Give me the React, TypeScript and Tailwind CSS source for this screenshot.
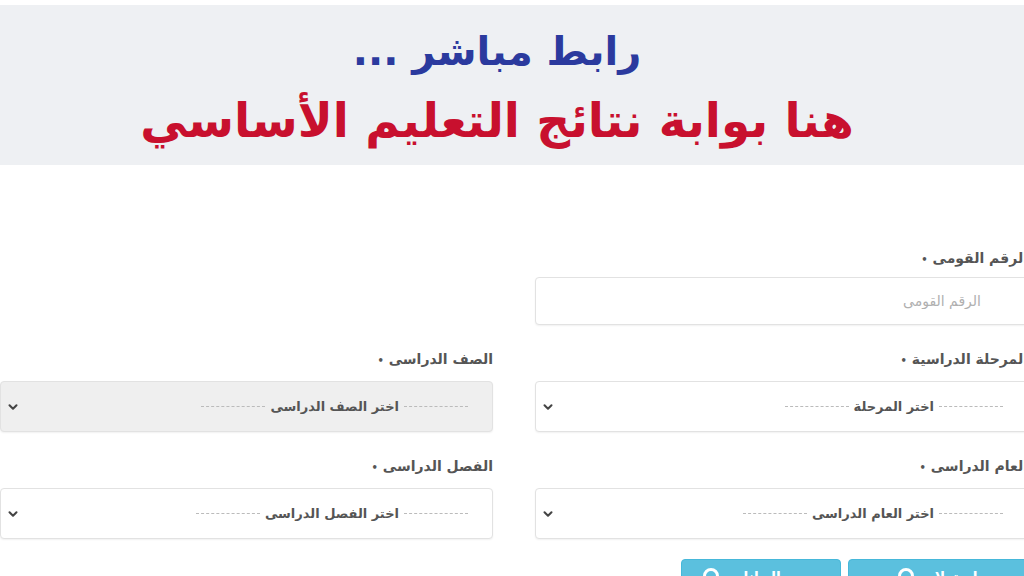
import { ChevronDown } from "lucide-react"

const font = { fontFamily: '"DejaVu Sans", "Noto Sans", sans-serif' }

function Dashes() {
  return <span className="block h-px w-[64px] border-t border-dashed border-[#bbb]" />
}

function Field({
  label,
  placeholder,
  disabled,
}: {
  label: string
  placeholder: string
  disabled?: boolean
}) {
  return (
    <div className="flex flex-col gap-[10px]">
      <label className="text-[14px] font-bold leading-[20px] text-[#555]">
        {label} <span className="text-[10px]">•</span>
      </label>
      <div
        className={`relative flex h-[51px] items-center rounded-[4px] border border-[#e2e2e2] pr-[24px] shadow-[0_1px_2px_rgba(0,0,0,0.06)] ${
          disabled ? "bg-[#efefef]" : "bg-white"
        }`}
      >
        <div className="flex items-center gap-[5px] text-[13px] font-bold text-[#555]">
          <Dashes />
          <span>{placeholder}</span>
          <Dashes />
        </div>
        <ChevronDown className="absolute left-[5px] top-1/2 h-[14px] w-[14px] -translate-y-1/2 text-[#444]" strokeWidth={3.5} />
      </div>
    </div>
  )
}

function CircleIcon() {
  return <span className="mt-[1px] h-[16px] w-[16px] rounded-full border-[3px] border-white" />
}

export default function App() {
  return (
    <div className="h-[576px] w-[1024px] overflow-hidden bg-white" style={font}>
      <header className="border-t-[5px] border-white bg-[#eef0f3] pb-[10px] text-center" dir="rtl">
        <div className="mr-[30px]">
          <h1 className="pt-[20px] text-[40px] font-bold leading-[52px] text-[#2b3a9e]">رابط مباشر ...</h1>
          <h2 className="mt-[10px] text-[47px] font-bold leading-[68px] text-[#c8102e]">
            هنا بوابة نتائج التعليم الأساسي
          </h2>
        </div>
      </header>

      <div dir="rtl" className="mr-[-4px] pt-[83px]">
        <div className="grid grid-cols-[493px_535px] gap-y-[24px]">
          <div className="flex flex-col gap-[7px]">
            <label className="text-[14px] font-bold leading-[20px] text-[#555]">
              الرقم القومى <span className="text-[10px]">•</span>
            </label>
            <input
              placeholder="الرقم القومى"
              className="h-[48px] rounded-[4px] border border-[#e2e2e2] bg-white pr-[46px] text-[14px] text-[#555] shadow-[0_1px_2px_rgba(0,0,0,0.06)] outline-none placeholder:text-[#b0b0b0]"
              style={font}
            />
          </div>
          <div />

          <Field label="المرحلة الدراسية" placeholder="اختر المرحلة" />
          <div className="pr-[42px]">
            <Field label="الصف الدراسى" placeholder="اختر الصف الدراسى" disabled />
          </div>

          <Field label="العام الدراسى" placeholder="اختر العام الدراسى" />
          <div className="pr-[42px]">
            <Field label="الفصل الدراسى" placeholder="اختر الفصل الدراسى" />
          </div>
        </div>

        <div className="mt-[20px] flex gap-[7px]">
          <button className="flex h-[40px] w-[180px] items-start justify-center gap-[10px] rounded-[4px] border border-[#46b8da] bg-[#5bc0de] pt-[7px] text-[14px] font-bold text-white">
            استعلام
            <CircleIcon />
          </button>
          <button className="flex h-[40px] w-[160px] items-start justify-center gap-[10px] rounded-[4px] border border-[#46b8da] bg-[#5bc0de] pt-[7px] text-[14px] font-bold text-white">
            مسح البيانات
            <CircleIcon />
          </button>
        </div>
      </div>
    </div>
  )
}
